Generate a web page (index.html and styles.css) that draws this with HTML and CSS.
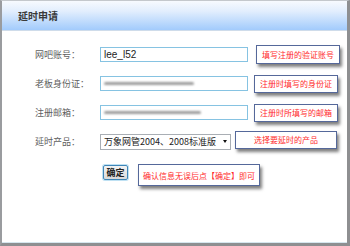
FILE: index.html
```html
<!DOCTYPE html>
<html lang="zh">
<head>
<meta charset="utf-8">
<link rel="stylesheet" href="styles.css">
</head>
<body>
<div class="frame">
  <div class="header">延时申请</div>
  <div class="body">
    <div class="row">
      <div class="label">网吧账号：</div>
      <div class="field"><span class="val">lee_l52</span></div>
      <div class="tip t1">填写注册的验证账号</div>
    </div>
    <div class="row">
      <div class="label">老板身份证：</div>
      <div class="field"><span class="blur b2"></span></div>
      <div class="tip t2">注册时填写的身份证</div>
    </div>
    <div class="row">
      <div class="label">注册邮箱：</div>
      <div class="field"><span class="blur b3"></span></div>
      <div class="tip t2">注册时所填写的邮箱</div>
    </div>
    <div class="row">
      <div class="label">延时产品：</div>
      <div class="select"><span class="sel-text">万象网管2004、2008标准版</span><span class="arrow"></span></div>
      <div class="tip t4">选择要延时的产品</div>
    </div>
    <div class="row btnrow">
      <div class="btn">确定</div>
      <div class="tip t5">确认信息无误后点【确定】即可</div>
    </div>
  </div>
</div>
</body>
</html>
```
FILE: styles.css
```css
* { box-sizing: border-box; }
html, body { margin: 0; padding: 0; background: #ffffff; }
body {
  width: 350px;
  height: 246px;
  overflow: hidden;
  font-family: "Noto Sans CJK SC", "Liberation Sans", sans-serif;
}
.frame {
  width: 350px;
  height: 246px;
  border-left: 2px solid #9a9c9f;
  border-top: 1px solid #c4c8cc;
  border-right: 3px solid #8e8f91;
  border-bottom: 3px solid #8e8f91;
  box-shadow: inset 0 -1px 0 #d6e6ee;
  background: #fff;
}
.header {
  height: 30px;
  background: linear-gradient(#f7fafe 0%, #e2eefd 35%, #a2cbfc 100%);
  border-bottom: 1px solid #cfdcea;
  font-size: 10px;
  font-weight: bold;
  color: #3a3a3a;
  line-height: 30px;
  padding-left: 16px;
}
.body {
  padding-top: 9px;
  padding-left: 33px;
}
.row {
  display: flex;
  align-items: center;
  height: 29px;
}
.label {
  width: 65px;
  font-size: 9px;
  color: #606060;
}
.field {
  width: 148px;
  height: 15px;
  border: 1px solid #86c3e2;
  display: flex;
  align-items: center;
  padding-left: 3px;
}
.val {
  font-family: "Liberation Sans", sans-serif;
  font-size: 10px;
  color: #222;
}
.blur {
  display: block;
  height: 3px;
  background: #9c9c9c;
  filter: blur(1px);
  border-radius: 2px;
}
.b2 { width: 90px; }
.b3 { width: 97px; }
.tip {
  background: #fff;
  border: 1px solid #55689a;
  box-shadow: 2px 3px 3px rgba(0, 0, 0, 0.5);
  color: #ff2a2a;
  font-size: 8px;
  display: flex;
  align-items: center;
  justify-content: center;
}
.t1 { width: 84px; height: 19px; margin-left: 8px; }
.t2 { width: 84px; height: 18px; margin-left: 6px; }
.t4 { width: 102px; height: 18px; margin-left: 4px; margin-top: -4px; }
.t5 { width: 122px; height: 22px; margin-left: 10px; margin-top: 0px; }
.select {
  width: 131px;
  height: 16px;
  border: 1px solid #a9aeb4;
  display: flex;
  align-items: center;
  padding-left: 3px;
  position: relative;
}
.sel-text {
  font-size: 9px;
  color: #222;
  white-space: nowrap;
}
.arrow {
  width: 0;
  height: 0;
  border-left: 2.5px solid transparent;
  border-right: 2.5px solid transparent;
  border-top: 3px solid #111;
  margin-left: 7px;
}
.btnrow {
  height: 30px;
  margin-top: 8px;
  padding-left: 68px;
  align-items: flex-start;
}
.btn {
  width: 25px;
  height: 15px;
  margin-top: 1px;
  border: 1px solid #3f86b8;
  border-radius: 2px;
  background: linear-gradient(#f3f3f3, #d9d9d9);
  box-shadow: 0 0 0 1px #bfe1f3;
  font-size: 9px;
  font-weight: bold;
  color: #222;
  display: flex;
  align-items: center;
  justify-content: center;
}
```
